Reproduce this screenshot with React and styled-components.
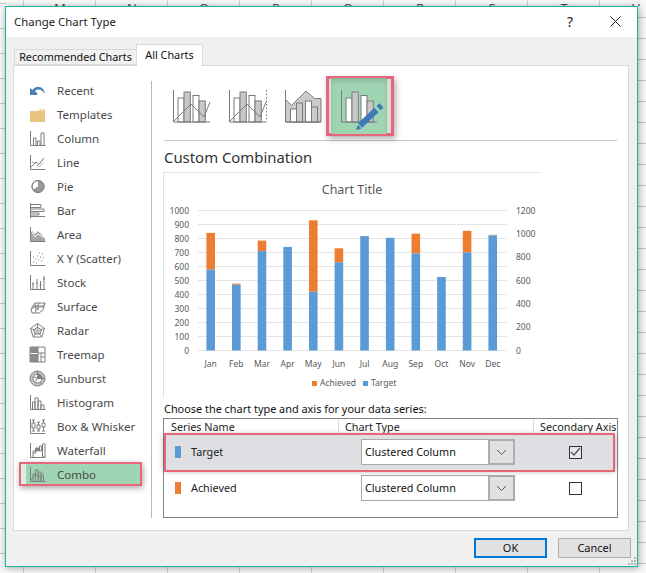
import styled, { createGlobalStyle } from "styled-components"

const GlobalStyle = createGlobalStyle`
  html, body { margin: 0; padding: 0; background: #fff; }
  * { box-sizing: border-box; }
`

const UI_FONT = `"Noto Sans", "Open Sans", "Liberation Sans", sans-serif`
const GREY = "#7f7f7f"

const Sheet = styled.div`
  width: 646px;
  height: 573px;
  overflow: hidden;
  font-family: ${UI_FONT};
  background-color: #f8f8f8;
  background-image:
    linear-gradient(#c4c4c4 1px, transparent 1px),
    linear-gradient(#c4c4c4 1px, transparent 1px),
    linear-gradient(90deg, #d0d0d0 1px, transparent 1px);
  background-size: 6px 25px, 8px 21px, 72px 100%;
  background-position: 0 3px, 100% 17px, 23px 0;
  background-repeat: repeat-y, repeat-y, repeat-x;
`
const ColumnHeads = styled.div`
  display: grid;
  grid-template-columns: repeat(9, 72px);
  margin-left: 24px;
  height: 6px;
  overflow: hidden;
  font-size: 13px;
  line-height: 16px;
  text-align: center;
  color: #444;
`
const Dialog = styled.div`
  display: flex;
  flex-direction: column;
  width: 633px;
  height: 561px;
  margin-left: 5px;
  background: #f0f0f0;
  border: 1px solid #1fb59c;
  box-shadow: 1px 1px 7px rgba(0, 0, 0, 0.35);
`
const TitleBar = styled.div`
  display: flex;
  align-items: center;
  height: 30px;
  padding: 0 16px 2px 8px;
  background: #fff;
  font-size: 11.4px;
  color: #222;
`
const TitleText = styled.div`
  flex: 1;
`
const HelpMark = styled.div`
  width: 14px;
  margin-right: 33px;
  font-size: 14px;
  text-align: center;
  color: #222;
`
const Tabs = styled.div`
  display: flex;
  align-items: flex-end;
  height: 28px;
  padding: 7px 0 0 8px;
  position: relative;
  z-index: 1;
`
const Tab = styled.div`
  display: flex;
  align-items: center;
  justify-content: center;
  width: ${p => p.$width}px;
  height: ${p => (p.$active ? 22 : 16)}px;
  margin-bottom: ${p => (p.$active ? -1 : 0)}px;
  padding-bottom: ${p => (p.$active ? 2 : 1)}px;
  background: ${p => (p.$active ? "#fff" : "#f0f0f0")};
  border: 1px solid #d9d9d9;
  border-bottom: ${p => (p.$active ? "none" : "1px solid #d9d9d9")};
  border-right: ${p => (p.$active ? "1px solid #d9d9d9" : "none")};
  font-size: 10.8px;
  color: #111;
`
const Panel = styled.div`
  display: flex;
  width: 616px;
  height: 466px;
  margin-left: 7px;
  background: #fff;
  border: 1px solid #d9d9d9;
`
const Sidebar = styled.div`
  flex: none;
  width: 138px;
  height: 437px;
  margin-top: 15px;
  padding: 0 8px 0 5px;
  border-right: 1px solid #b9b9b9;
`
const SideItem = styled.div`
  position: relative;
  display: flex;
  align-items: center;
  gap: 11px;
  height: 24px;
  width: 123px;
  margin-top: ${p => (p.$first ? -3 : 0)}px;
  padding-left: 10px;
  font-size: 11.5px;
  color: #494949;
  ${p => p.$selected && `
    background: linear-gradient(90deg, #dbeee2 0, #dbeee2 5px, #9fd5b3 5px);
    border: 2px solid #e8657a;
    padding-left: 8px;
    box-shadow: 1px 2px 6px rgba(0, 0, 0, 0.35);
  `}
`
const Main = styled.div`
  flex: 1;
  padding: 12px 11px 0 12px;
`
const TypeRow = styled.div`
  display: flex;
  isolation: isolate;
  height: 56px;
  margin-left: -1px;
`
const TypeCell = styled.div`
  position: relative;
  width: 56px;
  height: 56px;
  padding: 12px 0 0 10px;
  ${p => p.$selected && `
    background: #9fd5b3;
    box-shadow: inset 0 4px 4px rgba(0, 0, 0, 0.12);
    &::before {
      content: "";
      position: absolute;
      z-index: -1;
      inset: -2px -7px -2px -5px;
      background: #d4ddd7;
      border: 3px solid #e8657a;
      box-shadow: 2px 3px 6px rgba(0, 0, 0, 0.3);
    }
  `}
`
const Rule = styled.div`
  height: 1px;
  width: 453px;
  margin-top: 6px;
  background: #c6c6c6;
`
const Heading = styled.div`
  display: flex;
  align-items: center;
  height: 31px;
  font-size: 14.9px;
  color: #333;
`
const ChartBox = styled.div`
  width: 378px;
  height: 226px;
  border-top: 1px solid #e2e2e2;
  border-left: 1px solid #e2e2e2;
  margin-left: -1px;
  svg { display: block; }
`
const Caption = styled.div`
  display: flex;
  align-items: center;
  height: 20px;
  font-size: 10.9px;
  color: #111;
`
const SeriesTable = styled.div`
  width: 455px;
  height: 100px;
  margin-left: -1px;
  background: #fff;
  border: 1px solid #88888c;
  font-size: 10.8px;
  color: #222;
`
const HeaderRow = styled.div`
  display: grid;
  grid-template-columns: 174px 195px 1fr;
  height: 15px;
  line-height: 15px;
`
const HeaderCell = styled.div`
  padding-left: ${p => p.$pad}px;
  border-left: ${p => (p.$line ? "1px solid #dcdcdc" : "none")};
  white-space: nowrap;
  overflow: hidden;
`
const SeriesRow = styled.div`
  position: relative;
  display: grid;
  grid-template-columns: 197px 154px 1fr;
  align-items: center;
  height: 36px;
  ${p => p.$marked && `
    background: #dfdfe3;
    z-index: 1;
    width: 451px;
    box-shadow: 0 1px 6px rgba(0, 0, 0, 0.35);
    &::after {
      content: "";
      position: absolute;
      inset: -1px 0 -2px 0;
      border: 2px solid #e8657a;
      pointer-events: none;
    }
  `}
`
const SeriesName = styled.div`
  display: flex;
  align-items: center;
  gap: 10px;
  padding-left: 11px;
`
const SeriesLabel = styled.span`
  margin-bottom: 2px;
`
const Swatch = styled.span`
  width: 6px;
  height: 12px;
  background: ${p => p.$color};
`
const Select = styled.div`
  display: flex;
  height: 26px;
  background: #fff;
  border: 1px solid #a9a9a9;
`
const SelectLabel = styled.div`
  flex: 1;
  display: flex;
  align-items: center;
  padding: 0 0 2px 3px;
  color: #111;
`
const SelectArrow = styled.div`
  display: flex;
  align-items: center;
  justify-content: center;
  width: 27px;
  margin: -1px;
  background: #e1e1e1;
  border: 2px solid #adadad;
`
const Check = styled.div`
  display: flex;
  align-items: center;
  justify-content: center;
  width: 13px;
  height: 13px;
  margin-left: 54px;
  background: ${p => (p.$on ? "#e8e8ea" : "#fff")};
  border: 1px solid #333;
`
const Footer = styled.div`
  position: relative;
  display: flex;
  justify-content: flex-end;
  gap: 11px;
  padding: 7px 6px 0 0;
  flex: 1;
`
const Button = styled.div`
  display: flex;
  align-items: center;
  justify-content: center;
  width: 73px;
  height: 20px;
  padding-bottom: 1px;
  background: #e1e1e1;
  border: ${p => (p.$primary ? "2px solid #0078d7" : "1px solid #adadad")};
  font-size: 11px;
  color: #111;
`
const Grip = styled.svg`
  position: absolute;
  right: 0;
  bottom: 0;
`

// small list icons, all on a 17x17 grid
const Ico = ({ children }) => (
  <svg width="17" height="17" viewBox="0 0 17 17" fill="none" stroke={GREY} strokeWidth="1" style={{ flex: "none" }}>
    {children}
  </svg>
)
const Axes = () => <path d="M1.5 1v14.5H16.5" />

const listIcons = {
  Recent: (
    <Ico>
      <path d="M1 13V6l2.6 2C6 4.500 11 3.500 14 7c1 1.200 1.700 3 2 5-2-3-4-4.500-6.500-4.500-1.500 0-2.500.5-3.500 1.500l2.500 2.500-.5 1.500z" fill="#4a7fba" stroke="none" />
    </Ico>
  ),
  Templates: (
    <Ico>
      <path d="M1 5h8.500l1.500-2h5v13H1z" fill="#e9c280" stroke="none" />
      <path d="M10 5l1.500-2H16v2z" fill="#f3dcb0" stroke="none" />
    </Ico>
  ),
  Column: (
    <Ico>
      <Axes />
      <path d="M4.500 15V8h2.500v7M8.500 15v-4h2.500v4M12 15V3h3v12" />
    </Ico>
  ),
  Line: (
    <Ico>
      <Axes />
      <path d="M2 13l5-5 3 2.500L15 4" />
      <path d="M3 8l3 1 4 4 5-5" strokeDasharray="1 1" />
    </Ico>
  ),
  Pie: (
    <Ico>
      <circle cx="9" cy="8.500" r="6" fill="#fff" />
      <path d="M9 8.500V2.500a6 6 0 1 1-5 9.300z" fill="#9a9a9a" stroke="none" />
      <circle cx="9" cy="8.500" r="6" />
    </Ico>
  ),
  Bar: (
    <Ico>
      <path d="M1.500 1v15" />
      <path d="M1.500 2.500H12v3H1.500M1.500 7H15v2.500H1.500M1.500 11H10v2H1.500M1.500 14.500H16" />
    </Ico>
  ),
  Area: (
    <Ico>
      <path d="M1 3l5 5 3-3 7 7v4H1z" fill="#a6a6a6" stroke="none" />
      <path d="M1 3l5 8 3-3 7 4" stroke="#fff" />
      <Axes />
    </Ico>
  ),
  "X Y (Scatter)": (
    <Ico>
      <Axes />
      <path d="M4 12h1M7 13h1M6 9h1M9 10h1M8 6h1M11 7h1M12 11h1M13 4h1M14 8h1M10 3h1M4 7h1" strokeDasharray="1 1" />
    </Ico>
  ),
  Stock: (
    <Ico>
      <Axes />
      <path d="M4 8v7M3 10h2M8 5v10M7 9h2M11.500 7v8M10.500 11h2M15 2v13M14 5h2" />
    </Ico>
  ),
  Surface: (
    <Ico>
      <path d="M2 11l4-6h10l-2 7-4 3H3z" />
      <path d="M6 5v4l-4 2M6 9h8l2-4M10 5l-2 4-2 6M4 8h10" />
      <path d="M6 9h4v3H6z" fill="#a6a6a6" stroke="none" />
    </Ico>
  ),
  Radar: (
    <Ico>
      <path d="M8.500 1.500l7 5-2.700 8.500H4.200L1.500 6.500zM8.500 1.500V9M15.500 6.500L8.500 9M12.800 15L8.500 9M4.200 15L8.500 9M1.500 6.500L8.500 9" />
      <path d="M8.500 5l4 3-1.500 4H6L4.500 8z" fill="#c8c8c8" fillOpacity="0.7" />
    </Ico>
  ),
  Treemap: (
    <Ico>
      <path d="M1 1h15v15H1z" fill="#fff" />
      <path d="M1 1h8v6H1zM1 8h8v8H1z" fill="#8c8c8c" stroke="none" />
      <path d="M9 1v15M9 7h7M12 7v9M12 11h4" />
    </Ico>
  ),
  Sunburst: (
    <Ico>
      <circle cx="8.500" cy="8.500" r="7.500" fill="#c4c4c4" />
      <circle cx="8.500" cy="8.500" r="4.500" fill="#fff" />
      <path d="M8.500 8.500V4a4.500 4.500 0 0 1 4.500 4.500z" fill="#7f7f7f" />
      <path d="M8.500 8.500l-3 3.500M8.500 8.500L4.500 6.500M13 8.500h3M11 12l2 2.500M8.500 1v3" />
    </Ico>
  ),
  Histogram: (
    <Ico>
      <Axes />
      <path d="M3.500 15V8h2.500v7M6 15V4h3v11M9 15V7h3v8M12 15v-4h3v4" />
    </Ico>
  ),
  "Box & Whisker": (
    <Ico>
      <Axes />
      <path d="M3 2h3M4.500 2v3M3 5h3v5H3zM4.500 10v3M3 13h3M8 4h3M9.500 4v3M8 7h3v4H8zM9.500 11v2M8 13h3M13 2h3M14.500 2v3M13 5h3v4h-3zM14.500 9v4M13 13h3" />
    </Ico>
  ),
  Waterfall: (
    <Ico>
      <Axes />
      <path d="M4 15V9h2.500v2H4" />
      <path d="M6.500 9h3V6h-3z" fill="#8c8c8c" />
      <path d="M10.500 4h2v5h-2zM13.500 2h2.500v13h-2.500z" />
    </Ico>
  ),
  Combo: (
    <Ico>
      <Axes />
      <path d="M4 15V8h2.500v7M6.500 15V4h2.500v11M9.500 15V6h2.500v9M12 15v-5h2.500v5" />
      <path d="M2 14l5-6 3 3 5-4" />
    </Ico>
  ),
}

const typeBars = [
  { x: 5, w: 6, top: 8, fill: "#fff" },
  { x: 11, w: 6.300, top: 2, fill: "#c8c8c8" },
  { x: 20, w: 6, top: 5.500, fill: "#fff" },
  { x: 26, w: 6.300, top: 11, fill: "#c8c8c8" },
]

const TypeBars = ({ bars = typeBars }) => (
  <g stroke="#7a7a7a">
    {bars.map(b => <rect key={b.x} x={b.x} y={b.top} width={b.w} height={32 - b.top} fill={b.fill} />)}
  </g>
)

const ClusteredIcon = ({ dotted }) => (
  <svg width="40" height="34" viewBox="0 0 40 34" fill="none" style={{ display: "block" }}>
    <TypeBars />
    <path d="M0.500 0v32H37" stroke="#7a7a7a" />
    <path d="M0.500 31.500L18 14l13 13 6-15" stroke="#7a7a7a" />
    {dotted && <path d="M37.500 0v32" stroke="#7a7a7a" strokeDasharray="1.500 2" />}
  </svg>
)

const AreaIcon = () => (
  <svg width="40" height="34" viewBox="0 0 40 34" fill="none" style={{ display: "block" }}>
    <path d="M0.500 9.500l6 6L21 1l8.500 7.500H36V32H0.500z" fill="#cbcbcb" stroke="#7a7a7a" />
    <TypeBars bars={[
      { x: 5.500, w: 6, top: 19, fill: "#fff" },
      { x: 11.500, w: 6, top: 13, fill: "#cbcbcb" },
      { x: 20.500, w: 6, top: 11, fill: "#fff" },
      { x: 26.500, w: 6, top: 17, fill: "#cbcbcb" },
    ]} />
    <path d="M0.500 0v32H36" stroke="#7a7a7a" />
  </svg>
)

const CustomIcon = () => (
  <svg width="44" height="42" viewBox="0 0 44 42" fill="none" style={{ display: "block" }}>
    <TypeBars />
    <path d="M0.500 0v32H36" stroke="#7a7a7a" />
    <path d="M19 35.500L35.500 20" stroke="#3f78b8" strokeWidth="6" />
    <path d="M37.500 18L40.500 15.500" stroke="#3f78b8" strokeWidth="6" />
    <path d="M15 40l2-5 3.500 3.500z" fill="#3f78b8" />
  </svg>
)

// chart data read off the left axis: [target, target + achieved]
const months = [
  ["Jan", 578, 840], ["Feb", 470, 478], ["Mar", 710, 785], ["Apr", 740, 740],
  ["May", 420, 930], ["Jun", 630, 730], ["Jul", 817, 817], ["Aug", 805, 805],
  ["Sep", 693, 835], ["Oct", 525, 525], ["Nov", 700, 855], ["Dec", 822, 826],
]
const PLOT_LEFT = 34
const PLOT_RIGHT = 343
const BASE = 177.500
const UNIT = 0.14
const labelStyle = { fontFamily: UI_FONT, fontSize: 8.500, fill: "#595959" }

const ComboChart = () => (
  <svg width="377" height="225" viewBox="0 0 377 225">
    <text x="188" y="21" textAnchor="middle" style={{ ...labelStyle, fontSize: 12.500 }}>Chart Title</text>
    {Array.from({ length: 11 }, (_, i) => {
      const y = BASE - i * 14
      return (
        <g key={i}>
          <line x1={PLOT_LEFT} x2={PLOT_RIGHT} y1={y} y2={y} stroke="#e4e4e4" />
          <text x="25" y={y + 3} textAnchor="end" style={labelStyle}>{i * 100}</text>
        </g>
      )
    })}
    {[0, 200, 400, 600, 800, 1000, 1200].map(v => (
      <text key={v} x="352" y={BASE - v * 140 / 1200 + 3} style={labelStyle}>{v}</text>
    ))}
    {months.map(([name, target, total], i) => {
      const cx = 46.700 + i * 25.640
      return (
        <g key={name}>
          <rect x={cx - 4.300} y={BASE - total * UNIT} width="8.600" height={(total - target) * UNIT} fill="#ed7d31" />
          <rect x={cx - 4.300} y={BASE - target * UNIT} width="8.600" height={target * UNIT} fill="#5b9bd5" />
          <text x={cx} y="194" textAnchor="middle" style={labelStyle}>{name}</text>
        </g>
      )
    })}
    <rect x="148" y="208" width="5" height="5" fill="#ed7d31" />
    <text x="156" y="213" style={labelStyle}>Achieved</text>
    <rect x="199" y="208" width="5" height="5" fill="#5b9bd5" />
    <text x="207" y="213" style={labelStyle}>Target</text>
  </svg>
)

const Chevron = () => (
  <svg width="11" height="7" viewBox="0 0 11 7" fill="none" stroke="#555">
    <path d="M1 1l4.500 4.500L10 1" />
  </svg>
)

const series = [
  { name: "Target", color: "#5b9bd5", secondary: true },
  { name: "Achieved", color: "#ed7d31", secondary: false },
]

export default function App() {
  return (
    <Sheet>
      <GlobalStyle />
      <ColumnHeads>
        {["M", "N", "O", "P", "Q", "R", "S", "T", "U"].map(c => <div key={c}>{c}</div>)}
      </ColumnHeads>
      <Dialog>
        <TitleBar>
          <TitleText>Change Chart Type</TitleText>
          <HelpMark>?</HelpMark>
          <svg width="11" height="11" viewBox="0 0 11 11" stroke="#222" fill="none">
            <path d="M0.500 0.500l10 10M10.500 0.500l-10 10" />
          </svg>
        </TitleBar>
        <Tabs>
          <Tab $width={122}>Recommended Charts</Tab>
          <Tab $width={67} $active>All Charts</Tab>
        </Tabs>
        <Panel>
          <Sidebar>
            {Object.keys(listIcons).map((name, i) => (
              <SideItem key={name} $first={i === 0} $selected={name === "Combo"}>
                {listIcons[name]}
                {name}
              </SideItem>
            ))}
          </Sidebar>
          <Main>
            <TypeRow>
              <TypeCell><ClusteredIcon /></TypeCell>
              <TypeCell><ClusteredIcon dotted /></TypeCell>
              <TypeCell><AreaIcon /></TypeCell>
              <TypeCell $selected><CustomIcon /></TypeCell>
            </TypeRow>
            <Rule />
            <Heading>Custom Combination</Heading>
            <ChartBox><ComboChart /></ChartBox>
            <Caption>Choose the chart type and axis for your data series:</Caption>
            <SeriesTable>
              <HeaderRow>
                <HeaderCell $pad={7}>Series Name</HeaderCell>
                <HeaderCell $pad={6} $line>Chart Type</HeaderCell>
                <HeaderCell $pad={6} $line>Secondary Axis</HeaderCell>
              </HeaderRow>
              {series.map(s => (
                <SeriesRow key={s.name} $marked={s.secondary}>
                  <SeriesName><Swatch $color={s.color} /><SeriesLabel>{s.name}</SeriesLabel></SeriesName>
                  <Select>
                    <SelectLabel>Clustered Column</SelectLabel>
                    <SelectArrow><Chevron /></SelectArrow>
                  </Select>
                  <Check $on={s.secondary}>
                    {s.secondary && (
                      <svg width="11" height="10" viewBox="0 0 11 10" fill="none" stroke="#555" strokeWidth="1.300">
                        <path d="M1 5l3 3 6-7" />
                      </svg>
                    )}
                  </Check>
                </SeriesRow>
              ))}
            </SeriesTable>
          </Main>
        </Panel>
        <Footer>
          <Button $primary>OK</Button>
          <Button>Cancel</Button>
          <Grip width="9" height="9" viewBox="0 0 9 9" fill="#b5b5b5">
            <path d="M6 0h2v2H6zM3 3h2v2H3zM6 3h2v2H6zM0 6h2v2H0zM3 6h2v2H3zM6 6h2v2H6z" />
          </Grip>
        </Footer>
      </Dialog>
    </Sheet>
  )
}
